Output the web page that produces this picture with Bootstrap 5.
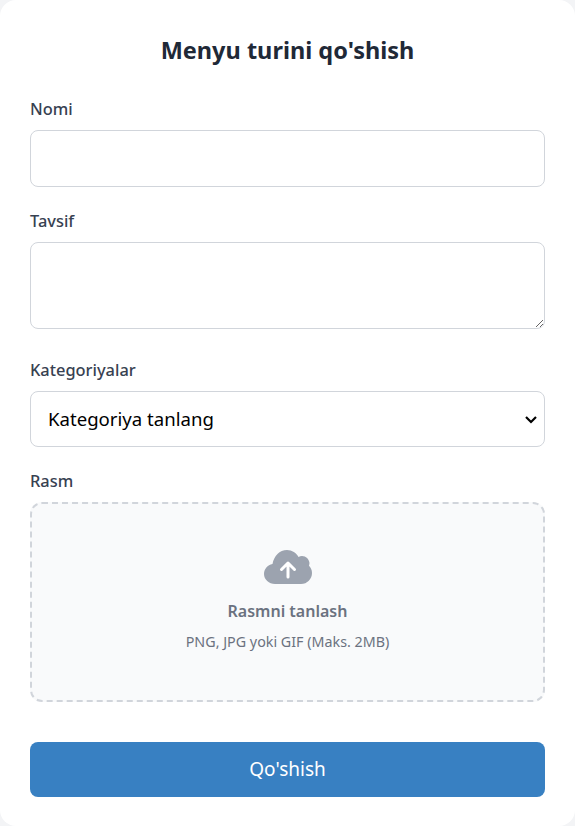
<!DOCTYPE html>
<html lang="uz">
<head>
<meta charset="utf-8">
<title>Menyu turini qo'shish</title>
<link href="https://cdn.jsdelivr.net/npm/bootstrap@5.3.0/dist/css/bootstrap.min.css" rel="stylesheet">
<style>
html,body{height:100%;}
body{background:#f3f4f6;font-family:"Noto Sans","Open Sans",sans-serif;overflow:hidden;}
.sheet{background:#fff;border-radius:16px;height:826px;padding:30px 30px 0;}
.sheet-title{font-size:23.5px;font-weight:700;color:#1f2937;line-height:40px;margin:0 0 29px;text-align:center;}
.field-label{display:block;font-size:16.4px;font-weight:500;color:#374151;line-height:20px;margin:0 0 11px;}
.field-box{border:1px solid #d1d5db;border-radius:8px;box-shadow:none;font-size:18px;display:block;width:100%;background-color:#fff;}
.field-input{height:57px;margin-bottom:24px;}
.field-area{height:87px;margin-bottom:31px;}
.field-select{height:56px;margin-bottom:24px;padding:0 40px 0 17px;font-size:18.6px;color:#000;background-position:right 5px center;background-size:16px 16px;background-image:url("data:image/svg+xml,%3Csvg xmlns='http://www.w3.org/2000/svg' viewBox='0 0 16 16'%3E%3Cpath fill='none' stroke='%23000' stroke-width='2.2' d='M3 6l5 5 5-5'/%3E%3C/svg%3E");}
.drop-zone{height:200px;margin-bottom:40px;border:2px dashed #d1d5db;border-radius:12px;background:#f9fafb;cursor:pointer;}
.drop-icon{width:48px;height:38px;margin-bottom:13px;margin-top:-4px;}
.drop-title{font-size:16px;font-weight:600;color:#6b7280;line-height:22px;margin-bottom:10px;}
.drop-hint{font-size:14.3px;color:#6b7280;line-height:20px;}
.submit-btn{height:55px;background:#3880c2;border:0;border-radius:8px;font-size:19px;color:#fff;}
.submit-btn:hover{background:#3880c2;color:#fff;}
</style>
</head>
<body>
<main class="sheet">
  <h1 class="sheet-title">Menyu turini qo'shish</h1>
  <form>
    <label class="field-label" for="nomi">Nomi</label>
    <input class="form-control field-box field-input" id="nomi" type="text">
    <label class="field-label" for="tavsif">Tavsif</label>
    <textarea class="form-control field-box field-area" id="tavsif"></textarea>
    <label class="field-label" for="kat">Kategoriyalar</label>
    <select class="form-select field-box field-select" id="kat">
      <option>Kategoriya tanlang</option>
    </select>
    <label class="field-label" for="rasm">Rasm</label>
    <div class="drop-zone d-flex flex-column align-items-center justify-content-center">
      <svg class="drop-icon" viewBox="0 0 48 38" aria-hidden="true">
        <path fill="#9ca3af" d="M11 35C5 35 0 30.500 0 25c0-5 3.500-9 8.500-10C10 7 15.500 1 23 1c5 0 9.500 3 11.500 7 1-.6 2.300-1 3.500-1 4 0 7 3 7.500 7-.1 1.200-.3 2-.5 2.800 1.800 1.800 3 4.300 3 7.200 0 6-4.800 11-11 11z"/>
        <path fill="none" stroke="#fff" stroke-width="3" stroke-linecap="round" stroke-linejoin="round" d="M24 28V14M17.500 20.500 24 14l6.500 6.500"/>
      </svg>
      <div class="drop-title">Rasmni tanlash</div>
      <div class="drop-hint">PNG, JPG yoki GIF (Maks. 2MB)</div>
    </div>
    <button type="button" class="btn submit-btn w-100">Qo'shish</button>
  </form>
</main>
<script src="https://cdn.jsdelivr.net/npm/bootstrap@5.3.0/dist/js/bootstrap.bundle.min.js"></script>
</body>
</html>
